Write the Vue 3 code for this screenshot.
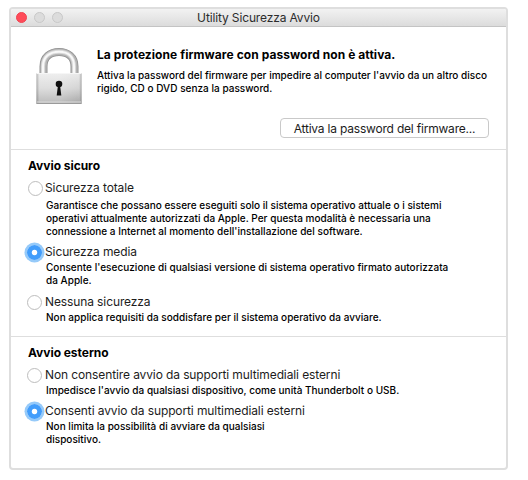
<script setup>
import { ref } from 'vue'

const secureBoot = ref('medium')
const externalBoot = ref('allow')

const secureOptions = [
  {
    id: 'full',
    label: 'Sicurezza totale',
    lines: [
      'Garantisce che possano essere eseguiti solo il sistema operativo attuale o i sistemi',
      'operativi attualmente autorizzati da Apple. Per questa modalità è necessaria una',
      "connessione a Internet al momento dell'installazione del software."
    ]
  },
  {
    id: 'medium',
    label: 'Sicurezza media',
    lines: [
      "Consente l'esecuzione di qualsiasi versione di sistema operativo firmato autorizzata",
      'da Apple.'
    ]
  },
  {
    id: 'none',
    label: 'Nessuna sicurezza',
    lines: ['Non applica requisiti da soddisfare per il sistema operativo da avviare.']
  }
]

const externalOptions = [
  {
    id: 'deny',
    label: 'Non consentire avvio da supporti multimediali esterni',
    lines: ["Impedisce l'avvio da qualsiasi dispositivo, come unità Thunderbolt o USB."]
  },
  {
    id: 'allow',
    label: 'Consenti avvio da supporti multimediali esterni',
    lines: ['Non limita la possibilità di avviare da qualsiasi', 'dispositivo.']
  }
]
</script>

<template>
  <main class="window">
    <header class="titlebar">
      <div class="lights">
        <span class="light close"></span>
        <span class="light"></span>
        <span class="light"></span>
      </div>
      <h1>Utility Sicurezza Avvio</h1>
    </header>

    <section class="firmware">
      <svg class="lock" viewBox="0 0 46 58" width="46" height="58">
        <defs>
          <linearGradient id="body" x1="0" y1="0" x2="0" y2="1">
            <stop offset="0" stop-color="#e8e8e8" />
            <stop offset="0.5" stop-color="#cfcfcf" />
            <stop offset="1" stop-color="#9c9c9c" />
          </linearGradient>
          <linearGradient id="sheen" x1="0" y1="0" x2="1" y2="0">
            <stop offset="0" stop-color="#777" stop-opacity="0.5" />
            <stop offset="0.07" stop-color="#fff" stop-opacity="0.3" />
            <stop offset="0.5" stop-color="#fff" stop-opacity="0.3" />
            <stop offset="0.93" stop-color="#fff" stop-opacity="0.1" />
            <stop offset="1" stop-color="#666" stop-opacity="0.5" />
          </linearGradient>
        </defs>
        <path d="M7.500 27V19.500C7.500 10 14 5 23 5S38.500 10 38.500 19.500V27" fill="none" stroke="#909090" stroke-width="8" />
        <path d="M7.500 27V19.500C7.500 10 14 5 23 5S38.500 10 38.500 19.500V27" fill="none" stroke="#b4b4b4" stroke-width="6.400" />
        <path d="M7 27V19.500C7 9.500 14 4.700 23 4.700S38 9.500 38 19.500V27" fill="none" stroke="#d8d8d8" stroke-width="4" />
        <path d="M7 27V19.500C7 9.500 14 4.700 23 4.700S38 9.500 38 19.500V27" fill="none" stroke="#f8f8f8" stroke-width="2" />
        <rect x="0.500" y="26" width="45" height="31" rx="1" fill="url(#body)" />
        <rect x="0.500" y="26" width="45" height="31" rx="1" fill="url(#sheen)" />
        <path d="M1 26.500H45" stroke="#f6f6f6" />
        <path d="M1 55H45" stroke="#dadada" />
        <path d="M0.500 56.500H45.500" stroke="#9a9a9a" />
        <circle cx="23" cy="37" r="3.300" fill="#111" />
        <path d="M22 38H24L25.300 48.500H20.700Z" fill="#111" />
      </svg>
      <div class="firmware-text">
        <h2>La protezione firmware con password non è attiva.</h2>
        <p class="description">
          <span>Attiva la password del firmware per impedire al computer l'avvio da un altro disco</span>
          <span>rigido, CD o DVD senza la password.</span>
        </p>
        <button type="button">Attiva la password del firmware...</button>
      </div>
    </section>

    <section class="group secure">
      <h2>Avvio sicuro</h2>
      <div v-for="option in secureOptions" :key="option.id" class="option" :class="option.id">
        <div class="choice" @click="secureBoot = option.id">
          <span class="radio" :class="{ checked: secureBoot === option.id }"></span>
          <span class="label">{{ option.label }}</span>
        </div>
        <p class="description">
          <span v-for="line in option.lines" :key="line">{{ line }}</span>
        </p>
      </div>
    </section>

    <section class="group external">
      <h2>Avvio esterno</h2>
      <div v-for="option in externalOptions" :key="option.id" class="option" :class="option.id">
        <div class="choice" @click="externalBoot = option.id">
          <span class="radio" :class="{ checked: externalBoot === option.id }"></span>
          <span class="label">{{ option.label }}</span>
        </div>
        <p class="description">
          <span v-for="line in option.lines" :key="line">{{ line }}</span>
        </p>
      </div>
    </section>
  </main>
</template>

<style>
body {
  margin: 0;
  background: #fff;
}
</style>

<style scoped>
.window {
  box-sizing: border-box;
  width: 499px;
  height: 463px;
  margin: 7px 0 0 9px;
  border: 2px solid #dedede;
  border-radius: 4px;
  background: #fff;
  color: #000;
  font-family: Inter, 'Liberation Sans', sans-serif;
  white-space: nowrap;
  overflow: hidden;
}

h1,
h2,
p {
  margin: 0;
}

/* Title bar */
.titlebar {
  box-sizing: border-box;
  display: grid;
  grid-template-columns: 1fr auto 1fr;
  align-items: center;
  height: 18px;
  border-bottom: 1px solid #c4c4c4;
  background: linear-gradient(#f2f2f2, #dcdcdc);
}

.titlebar h1 {
  font-size: 12px;
  font-weight: 400;
  line-height: 16px;
  letter-spacing: -0.14px;
  color: #2c2c2c;
}

.lights {
  display: flex;
  gap: 7px;
  padding-left: 5px;
}

.light {
  box-sizing: border-box;
  width: 11px;
  height: 11px;
  border: 1px solid #c8c8c8;
  border-radius: 50%;
  background: #dcdcdc;
}

.close {
  border-color: #f04351;
  background: #ff4b59;
}

/* Firmware password */
.firmware {
  box-sizing: border-box;
  display: flex;
  height: 123px;
  padding: 20px 17px 0 25px;
  border-bottom: 1px solid #dedede;
}

.lock {
  flex: none;
}

.firmware-text {
  display: flex;
  flex: 1;
  flex-direction: column;
  padding-left: 15px;
}

h2 {
  font-size: 12px;
  font-weight: 700;
  line-height: 16px;
  letter-spacing: -0.04px;
}

.firmware h2 {
  letter-spacing: 0.07px;
}

.description {
  font-size: 10px;
  font-weight: 450;
  line-height: 13px;
  letter-spacing: 0.02px;
}

.description span {
  display: block;
}

.firmware-text .description {
  margin-top: 6px;
}

button {
  align-self: flex-end;
  box-sizing: border-box;
  width: 209px;
  height: 20px;
  margin-top: 23px;
  padding: 1px 0 0;
  border: 1px solid #c9c9c9;
  border-radius: 4px;
  background: #fff;
  color: #1c1c1c;
  font: inherit;
  font-size: 12px;
  line-height: 16px;
  letter-spacing: -0.2px;
}

/* Boot options */
.group {
  box-sizing: border-box;
  padding: 8px 0 0 17px;
}

.secure {
  height: 187px;
  border-bottom: 1px solid #dedede;
}

.choice {
  display: flex;
  align-items: center;
  height: 16px;
}

.label {
  font-size: 12px;
  line-height: 16px;
  letter-spacing: -0.11px;
  color: #1c1c1c;
}

.radio {
  box-sizing: border-box;
  flex: none;
  width: 15px;
  height: 15px;
  margin-right: 3px;
  margin-left: -1px;
  border: 1px solid #bdbdbd;
  border-radius: 50%;
  background: #fff;
}

.full .radio {
  margin-right: 2px;
  margin-left: 0;
}

.radio.checked {
  border: 0;
  background: radial-gradient(circle, #fff 2.300px, #429dfb 3.200px);
  box-shadow: 0 0 0 2.500px #96caf9;
}

.option .description {
  padding-left: 18px;
}

.full {
  margin-top: 6px;
}

.full .description {
  padding-top: 3px;
}

.medium {
  margin-top: 6px;
}

.medium .description {
  padding-top: 1px;
}

.none {
  margin-top: 7px;
}

.none .description {
  padding-top: 1px;
}

.deny {
  margin-top: 6px;
}

.deny .description {
  padding-top: 1px;
}

.allow {
  margin-top: 6px;
}

.allow .description {
  padding-top: 1px;
}
</style>
